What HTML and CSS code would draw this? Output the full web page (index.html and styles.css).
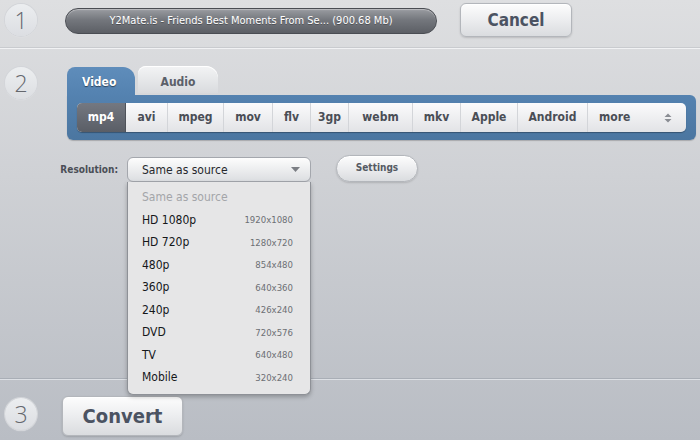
FILE: index.html
```html
<!DOCTYPE html>
<html>
<head>
    <title>Convert video</title>
    <link rel="stylesheet" href="styles.css">
</head>
<body>
    <div class="step step-one">
        <div class="num">1</div>
        <div class="progress">Y2Mate.is - Friends Best Moments From Se... (900.68 Mb)</div>
        <button class="btn cancel">Cancel</button>
    </div>

    <div class="step step-two">
        <div class="num">2</div>
        <div class="content">
            <div class="tabs">
                <div class="tab active">Video</div>
                <div class="tab">Audio</div>
            </div>
            <div class="panel">
                <div class="formats">
                    <div class="fmt selected w-mp4">mp4</div>
                    <div class="fmt w-avi">avi</div>
                    <div class="fmt w-mpeg">mpeg</div>
                    <div class="fmt w-mov">mov</div>
                    <div class="fmt w-flv">flv</div>
                    <div class="fmt w-3gp">3gp</div>
                    <div class="fmt w-webm">webm</div>
                    <div class="fmt w-mkv">mkv</div>
                    <div class="fmt w-apple">Apple</div>
                    <div class="fmt w-android">Android</div>
                    <div class="fmt more">
                        more
                        <svg width="8" height="10" viewBox="0 0 8 10"><path d="M4 0.5 L7.5 4 L0.5 4 Z M4 9.5 L7.5 6 L0.5 6 Z" fill="#8a8d93"/></svg>
                    </div>
                </div>
            </div>

            <div class="options">
                <label class="opt-label">Resolution:</label>
                <div class="select-wrap">
                    <div class="select">
                        <span>Same as source</span>
                        <svg width="9" height="5" viewBox="0 0 9 5"><path d="M0 0 L9 0 L4.5 5 Z" fill="#7b7e84"/></svg>
                    </div>
                    <ul class="dropdown">
                        <li class="muted"><span>Same as source</span></li>
                        <li><span>HD 1080p</span><small>1920x1080</small></li>
                        <li><span>HD 720p</span><small>1280x720</small></li>
                        <li><span>480p</span><small>854x480</small></li>
                        <li><span>360p</span><small>640x360</small></li>
                        <li><span>240p</span><small>426x240</small></li>
                        <li><span>DVD</span><small>720x576</small></li>
                        <li><span>TV</span><small>640x480</small></li>
                        <li><span>Mobile</span><small>320x240</small></li>
                    </ul>
                </div>
                <button class="btn settings">Settings</button>
            </div>
        </div>
    </div>

    <div class="step step-three">
        <div class="num">3</div>
        <button class="btn convert">Convert</button>
    </div>
</body>
</html>
```

FILE: styles.css
```css
html, body {
    margin: 0;
    padding: 0;
}
body {
    width: 700px;
    height: 440px;
    overflow: hidden;
    font-family: "DejaVu Sans Condensed", "DejaVu Sans", Verdana, sans-serif;
    background: linear-gradient(to bottom, #dedfe1 0%, #cfd1d5 40%, #b9bdc4 100%);
}

.step {
    display: flex;
    padding-left: 5px;
    box-sizing: border-box;
}
.step-one {
    height: 49px;
    align-items: flex-start;
    padding-top: 4px;
    border-bottom: 1px solid #f1f2f4;
    box-shadow: inset 0 -1px 0 #c9cbcf;
}
.step-two {
    height: 331px;
    padding-top: 18px;
    border-bottom: 1px solid #dde0e5;
    box-shadow: inset 0 -1px 0 #a9aeb6;
}
.step-three {
    padding-top: 17px;
    align-items: flex-start;
}

.num {
    width: 32px;
    height: 32px;
    flex: none;
    border-radius: 50%;
    background: linear-gradient(to bottom, #eceef0, #dcdee2);
    box-shadow: 0 0 0 1px #d3d5d9, 0 1px 1px rgba(255,255,255,0.7);
    color: #64676d;
    font-family: "Open Sans", sans-serif;
    font-weight: 300;
    font-size: 23px;
    line-height: 33px;
    text-align: center;
}
.step-three .num {
    margin-top: 1px;
}

.progress {
    margin-left: 28px;
    margin-top: 4px;
    width: 372px;
    height: 26px;
    box-sizing: border-box;
    border: 1px solid #4a4d53;
    border-radius: 13px;
    background: linear-gradient(to bottom, #9a9ca1 0%, #74777d 45%, #5c5f65 100%);
    box-shadow: inset 0 1px 1px rgba(255,255,255,0.35);
    color: #fff;
    font-size: 11px;
    line-height: 24px;
    text-align: center;
    text-shadow: 0 1px 0 rgba(0,0,0,0.3);
}

.btn {
    border: 1px solid #b3b6bb;
    background: linear-gradient(to bottom, #fdfdfd 0%, #ecedef 50%, #dadcdf 100%);
    box-shadow: 0 1px 2px rgba(0,0,0,0.15), inset 0 1px 0 #fff;
    color: #4b5362;
    font-family: "DejaVu Sans Condensed", "DejaVu Sans", Verdana, sans-serif;
    font-weight: bold;
    padding: 0;
    cursor: pointer;
}
.cancel {
    margin-left: 23px;
    margin-top: -1px;
    width: 112px;
    height: 34px;
    border-radius: 6px;
    font-size: 17px;
}
.convert {
    margin-left: 25px;
    margin-top: -1px;
    width: 121px;
    height: 40px;
    border-radius: 6px;
    font-size: 20px;
}
.settings {
    margin-left: 25px;
    width: 82px;
    height: 27px;
    border-radius: 14px;
    font-size: 10px;
    color: #555a63;
    padding-bottom: 3px;
}

.content {
    margin-left: 30px;
    width: 629px;
}

.tabs {
    display: flex;
    height: 28px;
    align-items: flex-end;
}
.tab {
    width: 80px;
    height: 27px;
    margin-left: 3px;
    margin-bottom: 2px;
    box-sizing: border-box;
    border-radius: 8px 12px 0 0;
    background: linear-gradient(to bottom, #f3f4f5, #d9dbde);
    box-shadow: inset 0 1px 0 #fff;
    color: #5b6069;
    font-weight: bold;
    font-size: 12px;
    line-height: 32px;
    text-align: center;
}
.tab.active {
    width: 68px;
    height: 28px;
    margin-left: 0;
    margin-bottom: 0;
    padding-left: 15px;
    text-align: left;
    line-height: 30px;
    background: linear-gradient(to bottom, #5f8dbb, #5482b0);
    box-shadow: none;
    color: #fff;
    text-shadow: 0 1px 1px rgba(0,0,0,0.5);
}

.panel {
    height: 45px;
    box-sizing: border-box;
    padding: 8px 10px;
    background: linear-gradient(to bottom, #5482b0, #4b76a0);
    border-radius: 0 6px 6px 6px;
    box-shadow: 0 1px 1px rgba(0,0,0,0.2);
}
.formats {
    display: flex;
    height: 29px;
    border-radius: 5px;
    overflow: hidden;
    background: linear-gradient(to bottom, #fbfbfc, #e2e3e6);
    box-shadow: 0 1px 1px rgba(0,0,0,0.3);
}
.fmt {
    flex: none;
    box-sizing: border-box;
    border-right: 1px solid #d3d5d9;
    color: #4a4e56;
    font-weight: bold;
    font-size: 12px;
    line-height: 29px;
    text-align: center;
}
.fmt.selected {
    background: linear-gradient(to bottom, #747881, #5a5e66);
    border-right-color: #4f535a;
    color: #fff;
}
.w-mp4 { width: 49px; }
.w-avi { width: 42px; }
.w-mpeg { width: 56px; }
.w-mov { width: 49px; }
.w-flv { width: 38px; }
.w-3gp { width: 38px; }
.w-webm { width: 64px; }
.w-mkv { width: 48px; }
.w-apple { width: 57px; }
.w-android { width: 70px; }
.fmt.more {
    flex: 1;
    border-right: none;
    display: flex;
    justify-content: space-between;
    align-items: center;
    padding: 0 14px 0 11px;
}

.options {
    display: flex;
    align-items: flex-end;
    margin-top: 15px;
    margin-left: -9px;
}
.opt-label {
    width: 60px;
    margin-right: 9px;
    text-align: right;
    color: #4a4e56;
    font-weight: bold;
    font-size: 10px;
    line-height: 25px;
}
.select-wrap {
    position: relative;
    width: 184px;
}
.select {
    height: 25px;
    box-sizing: border-box;
    border: 1px solid #a4a7ad;
    border-radius: 6px;
    background: linear-gradient(to bottom, #fdfdfd, #dcdee1);
    display: flex;
    justify-content: space-between;
    align-items: center;
    padding: 0 10px 0 14px;
    color: #26282c;
    font-size: 12px;
}
.dropdown {
    position: absolute;
    top: 25px;
    left: 0;
    width: 184px;
    box-sizing: border-box;
    margin: 0;
    padding: 4px 0 5px;
    list-style: none;
    background: #e6e6e7;
    border: 1px solid #8e9197;
    border-top: none;
    border-radius: 0 0 6px 6px;
    box-shadow: 0 2px 4px rgba(0,0,0,0.25);
}
.dropdown li {
    display: flex;
    justify-content: space-between;
    align-items: center;
    height: 22.5px;
    padding: 0 17px 0 14px;
    color: #15171a;
    font-size: 12px;
}
.dropdown li.muted {
    color: #a3a5a9;
}
.dropdown small {
    color: #6c6f74;
    font-size: 9.5px;
}
```
